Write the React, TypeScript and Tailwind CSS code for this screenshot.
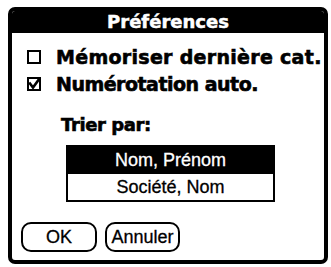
import React from "react";

const bold = { fontFamily: '"DejaVu Sans", "Liberation Sans", sans-serif' };
const reg = { fontFamily: '"Liberation Sans", "DejaVu Sans", sans-serif' };

function Box({ checked }: { checked?: boolean }) {
  return (
    <svg width="14" height="14" viewBox="0 0 14 14" className="shrink-0">
      <rect x="1" y="1" width="12" height="12" fill="none" stroke="black" strokeWidth="2" />
      {checked && (
        <path d="M3 6.5 L6 10.5 L12.5 1.5" fill="none" stroke="black" strokeWidth="2.6" strokeLinecap="square" />
      )}
    </svg>
  );
}

export default function App() {
  return (
    <div className="w-[331px] h-[267px] bg-white pt-[7px] pl-[8px]">
      <div className="w-[320px] h-[257px] border-4 border-black rounded-[7px] flex flex-col overflow-hidden">
        <div
          className="h-[23px] bg-black text-white text-[18px] font-bold leading-[23px] text-center -mt-[1px] [-webkit-text-stroke:0.5px_white]"
          style={bold}
        >
          Préférences
        </div>
        <div className="flex flex-col pl-[15px] pt-[12px]">
          <div className="flex items-center h-[24px] gap-[15px]">
            <Box />
            <span className="text-[19px] font-bold leading-[24px] tracking-[0.3px] whitespace-nowrap [-webkit-text-stroke:0.6px_black]" style={bold}>
              Mémoriser dernière cat.
            </span>
          </div>
          <div className="flex items-center h-[24px] gap-[15px] mt-[3px]">
            <Box checked />
            <span className="text-[19px] font-bold leading-[24px] tracking-[-0.5px] whitespace-nowrap [-webkit-text-stroke:0.6px_black]" style={bold}>
              Numérotation auto.
            </span>
          </div>
        </div>
        <div
          className="ml-[49px] mt-[17px] text-[18px] font-bold leading-[24px] tracking-[-0.4px] [-webkit-text-stroke:0.6px_black]"
          style={bold}
        >
          Trier par:
        </div>
        <div className="ml-[54px] mt-[8px] w-[209px] border-2 border-black flex flex-col">
          <div className="h-[27px] bg-black text-white text-[18px] leading-[27px] text-center [-webkit-text-stroke:0.3px_white]" style={reg}>
            Nom, Prénom
          </div>
          <div className="h-[26px] text-black text-[18px] leading-[26px] text-center [-webkit-text-stroke:0.3px_black]" style={reg}>
            Société, Nom
          </div>
        </div>
        <div className="flex ml-[9px] mt-[20px] gap-[8px]">
          <div
            className="w-[76px] h-[30px] border-2 border-black rounded-[10px] text-[18px] leading-[26px] text-center [-webkit-text-stroke:0.3px_black]"
            style={reg}
          >
            OK
          </div>
          <div
            className="w-[75px] h-[30px] border-2 border-black rounded-[10px] text-[18px] leading-[26px] text-center [-webkit-text-stroke:0.3px_black]"
            style={reg}
          >
            Annuler
          </div>
        </div>
      </div>
    </div>
  );
}
